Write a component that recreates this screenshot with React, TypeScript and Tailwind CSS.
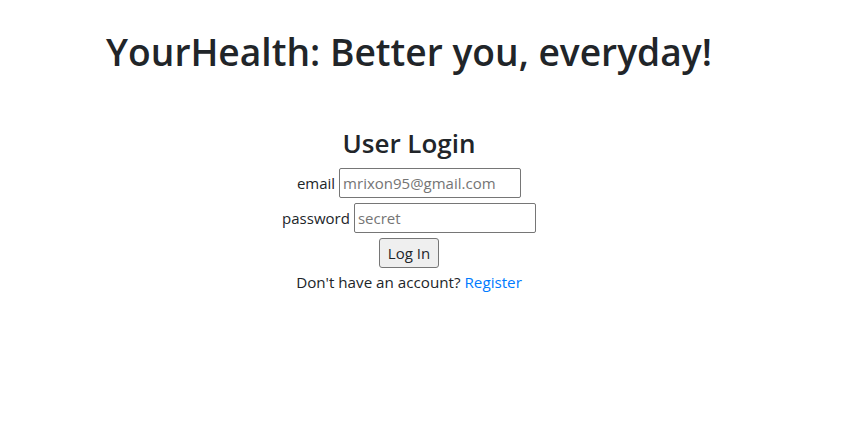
import React from "react";

export default function App() {
  const font = { fontFamily: '"Open Sans", "Noto Sans", sans-serif' };
  return (
    <div className="w-[818px] text-center text-[#212529] bg-white min-h-[439px]" style={font}>
      <h1 className="pt-[28px] text-[37.2px] font-semibold leading-[48px]">YourHealth: Better you, everyday!</h1>
      <h3 className="mt-[50px] text-[26px] font-semibold leading-[34px]">User Login</h3>
      <div className="mt-[8px] flex flex-col items-center gap-[5px] text-[15px]">
        <div className="flex items-center gap-[4px]">
          <label>email</label>
          <input
            placeholder="mrixon95@gmail.com"
            className="w-[182px] h-[30px] border border-[#767676] rounded-[2px] px-[3px] text-[15px] placeholder:text-[#757575] outline-none"
          />
        </div>
        <div className="flex items-center gap-[4px]">
          <label>password</label>
          <input
            placeholder="secret"
            type="password"
            className="w-[182px] h-[30px] border border-[#767676] rounded-[2px] px-[3px] text-[15px] placeholder:text-[#757575] outline-none"
          />
        </div>
        <button className="h-[30px] px-[8px] bg-[#efefef] border border-[#767676] rounded-[3px] text-[15px]">Log In</button>
        <p className="leading-[18px] text-[15.2px]">
          Don't have an account? <a className="text-[#007bff]" href="#">Register</a>
        </p>
      </div>
    </div>
  );
}
